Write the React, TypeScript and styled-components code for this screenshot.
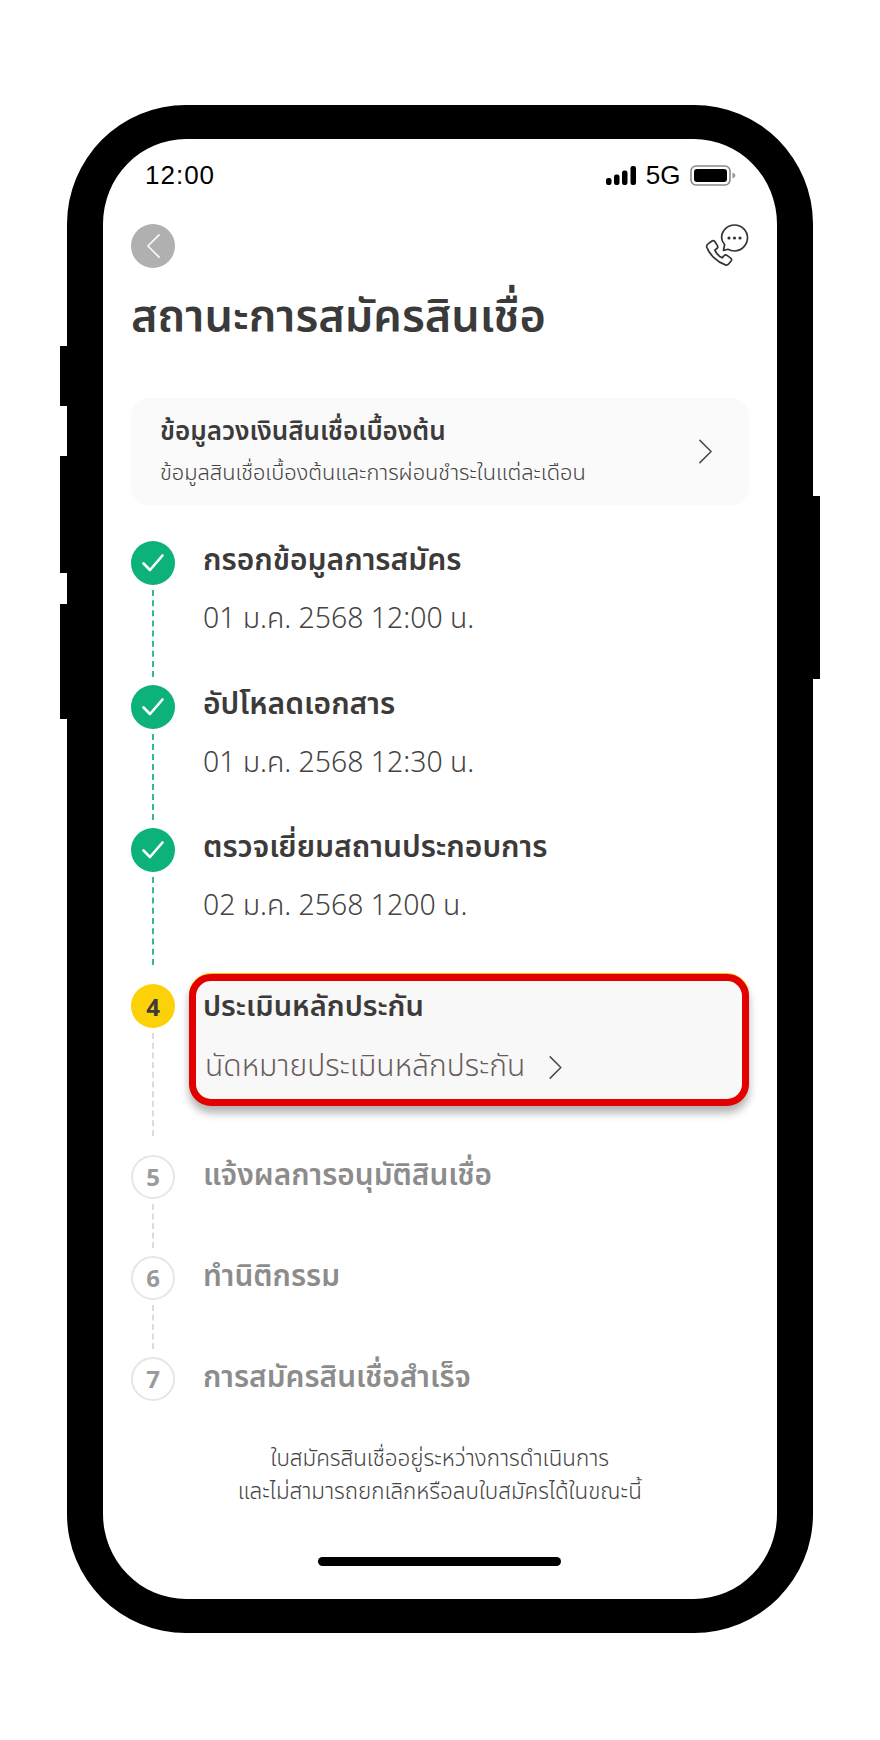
import React, { FC } from 'react';
import styled, { createGlobalStyle } from 'styled-components';

const thaiFont = `"Noto Sans Thai", "Noto Sans", "Open Sans", sans-serif`;

const GlobalStyle = createGlobalStyle`
  html, body {
    margin: 0;
    padding: 0;
    background: #fff;
  }
  * {
    box-sizing: border-box;
  }
`;

const Stage = styled.div`
  width: 880px;
  height: 1740px;
  padding: 105px 67px 0 67px;
  background: #fff;
  font-family: ${thaiFont};
`;

const Phone = styled.div`
  position: relative;
  width: 745.5px;
  height: 1528px;
  border: solid #000;
  border-width: 34px 36px;
  border-radius: 119px;
  background: #fff;
`;

const SideKey = styled.span<{ $side: 'left' | 'right'; $top: number; $height: number }>`
  position: absolute;
  top: ${(p) => p.$top}px;
  ${(p) => p.$side}: -43px;
  width: 8px;
  height: ${(p) => p.$height}px;
  background: #000;
`;

const Screen = styled.div`
  height: 100%;
  padding: 0 28px;
  display: flex;
  flex-direction: column;
`;

const StatusBar = styled.div`
  height: 70px;
  padding: 21px 13px 0 14px;
  display: flex;
  justify-content: space-between;
  align-items: flex-start;
  font-family: 'Liberation Sans', Arial, sans-serif;
  font-size: 26px;
  line-height: 30px;
  color: #000;
`;

const Time = styled.span`
  letter-spacing: 1px;
`;

const StatusIcons = styled.div`
  display: flex;
  align-items: center;
  gap: 9px;
`;

const TopBar = styled.div`
  height: 44px;
  margin-top: 15px;
  display: flex;
  justify-content: space-between;
  align-items: center;
`;

const BackButton = styled.button`
  width: 44px;
  height: 44px;
  padding: 0;
  border: none;
  border-radius: 50%;
  background: #b0b0b0;
  display: flex;
  align-items: center;
  justify-content: center;
`;

const PageTitle = styled.h1`
  margin: 18px 0 0;
  height: 62px;
  font-size: 45px;
  line-height: 62px;
  font-weight: 600;
  color: #3a3a3a;
  white-space: nowrap;
`;

const InfoCard = styled.div`
  margin-top: 50px;
  height: 107px;
  padding: 0 37px 0 29px;
  display: flex;
  justify-content: space-between;
  align-items: center;
  border-radius: 18px;
  background: #fafafa;
`;

const InfoTitle = styled.div`
  font-size: 26px;
  line-height: 40px;
  font-weight: 600;
  color: #3d3a3a;
  white-space: nowrap;
`;

const InfoText = styled.div`
  margin-top: 4px;
  font-size: 21.8px;
  line-height: 36px;
  font-weight: 300;
  color: #444;
  white-space: nowrap;
`;

const Steps = styled.div`
  margin-top: 36px;
  display: flex;
  flex-direction: column;
`;

const StepRow = styled.div<{ $height: number }>`
  height: ${(p) => p.$height}px;
  display: flex;
  gap: 28px;
`;

const Marker = styled.div`
  width: 44px;
  flex: none;
  display: flex;
  flex-direction: column;
  align-items: center;
`;

type Tone = 'done' | 'active' | 'pending';

const Dot = styled.div<{ $tone: Tone }>`
  width: 44px;
  height: 44px;
  flex: none;
  border-radius: 50%;
  display: flex;
  align-items: center;
  justify-content: center;
  font-family: 'Noto Sans', sans-serif;
  font-size: 24px;
  font-weight: 700;
  background: ${(p) => (p.$tone === 'done' ? '#0db27a' : p.$tone === 'active' ? '#fdd107' : '#fff')};
  border: ${(p) => (p.$tone === 'pending' ? '2px solid #e6e6e6' : 'none')};
  color: ${(p) => (p.$tone === 'pending' ? '#9a9a9a' : '#3d3a3a')};
`;

const Connector = styled.div<{ $tone: Tone; $tail: number }>`
  flex: 1;
  width: 0;
  margin: 5px 0 ${(p) => p.$tail}px;
  border-left: 2px dashed ${(p) => (p.$tone === 'done' ? '#36b795' : '#dcdcdc')};
`;

const StepBody = styled.div`
  flex: 1;
  min-width: 0;
`;

const StepTitle = styled.div<{ $tone: Tone }>`
  margin-top: ${(p) => (p.$tone === 'pending' ? 1 : 0)}px;
  font-size: ${(p) => (p.$tone === 'active' ? 29 : p.$tone === 'pending' ? 29.8 : 30)}px;
  line-height: 40px;
  font-weight: 600;
  color: ${(p) => (p.$tone === 'pending' ? '#8c8c8c' : '#3d3a3a')};
  white-space: nowrap;
`;

const StepDate = styled.div`
  margin-top: 19px;
  font-size: 28.4px;
  line-height: 40px;
  font-weight: 300;
  color: #444;
  white-space: nowrap;
`;

const ActiveBox = styled.div`
  position: relative;
  margin: -10px 0 0 -14px;
  width: 560px;
  height: 132px;
  padding: 6px 7px 0 7px;
  border: 7px solid #e30000;
  border-radius: 22px;
  background: #f8f8f8;
  box-shadow: 0 7px 8px rgba(0, 0, 0, 0.3), 0 -1px 0 #fdc400;
`;

const AppointmentLink = styled.div`
  margin-top: 20px;
  padding-left: 2px;
  display: flex;
  align-items: center;
  gap: 24px;
  font-size: 30px;
  line-height: 40px;
  font-weight: 300;
  color: #6a5c5c;
  white-space: nowrap;
`;

const FootNote = styled.p`
  margin: 42px 0 0;
  font-size: 22.4px;
  line-height: 33px;
  font-weight: 300;
  color: #444;
  text-align: center;
`;

const HomeBar = styled.div`
  margin: 48px auto 0;
  width: 243px;
  height: 9px;
  border-radius: 5px;
  background: #000;
`;

const Chevron: FC<{ width: number; height: number; color?: string; flip?: boolean }> = ({
  width,
  height,
  color = '#4a4a4a',
  flip,
}) => (
  <svg width={width} height={height} viewBox="0 0 14 26" fill="none">
    <path
      d={flip ? 'M13 1 1 13l12 12' : 'M1 1l12 12L1 25'}
      stroke={color}
      strokeWidth="1.5"
      strokeLinecap="round"
      strokeLinejoin="round"
      vectorEffect="non-scaling-stroke"
    />
  </svg>
);

const CheckIcon = () => (
  <svg width="24" height="20" viewBox="0 0 24 20" fill="none">
    <path d="M2.5 10.5 9 17 21.5 2.5" stroke="#fff" strokeWidth="2.6" strokeLinecap="round" strokeLinejoin="round" />
  </svg>
);

const SignalIcon = () => (
  <svg width="31" height="19" viewBox="0 0 31 19">
    <rect x="0" y="12" width="5.5" height="7" rx="2.2" fill="#000" />
    <rect x="8" y="8.5" width="5.5" height="10.5" rx="2.2" fill="#000" />
    <rect x="16" y="4.5" width="5.5" height="14.5" rx="2.2" fill="#000" />
    <rect x="24.5" y="0" width="5.5" height="19" rx="2.2" fill="#000" />
  </svg>
);

const BatteryIcon = () => (
  <svg width="46" height="21" viewBox="0 0 46 21">
    <rect x="1" y="1" width="39" height="19" rx="5" fill="none" stroke="#8a8a8a" strokeWidth="1.6" />
    <rect x="4" y="4" width="33" height="13" rx="3" fill="#000" />
    <path d="M42.5 7.5c1.8.6 2.8 1.7 2.8 3s-1 2.4-2.8 3z" fill="#9a9a9a" />
  </svg>
);

const CallChatIcon = () => (
  <svg width="44" height="44" viewBox="0 0 44 44" fill="none" stroke="#333" strokeWidth="1.7" strokeLinejoin="round">
    <path d="M3.4 19.6 7 17c1-.7 2.2-.4 2.8.5l2.6 4.1c.6 1 .4 2.2-.5 2.9l-2.1 1.6c1.6 3.600 4.200 6.200 7.300 7.700l2.100-2.100c.8-.8 1.900-.9 2.800-.3l3.700 2.700c1 .7 1.100 2 .4 2.900l-2.500 3c-.8 1-2.100 1.300-3.200.9C12.200 38 4 30 1.800 23.300c-.4-1.400.3-2.900 1.600-3.700z" />
    <path d="M18.500 26.500l1.100-6c-2-2.200-3-4.400-3-6.900C16.600 7 22.100 1 29.500 1S42.500 7 42.500 13.800 36.900 27 29.500 27c-2.500 0-4.700-.6-6.600-1.700z" />
    <circle cx="24" cy="14" r="1.600" fill="#333" stroke="none" />
    <circle cx="29.500" cy="14" r="1.600" fill="#333" stroke="none" />
    <circle cx="35" cy="14" r="1.600" fill="#333" stroke="none" />
  </svg>
);

const doneSteps = [
  { title: 'กรอกข้อมูลการสมัคร', date: '01 ม.ค. 2568 12:00 น.', height: 143.5, tail: 8 },
  { title: 'อัปโหลดเอกสาร', date: '01 ม.ค. 2568 12:30 น.', height: 143, tail: 8 },
  { title: 'ตรวจเยี่ยมสถานประกอบการ', date: '02 ม.ค. 2568 1200 น.', height: 156.5, tail: 19 },
];

const pendingSteps = [
  { no: 5, title: 'แจ้งผลการอนุมัติสินเชื่อ', height: 101 },
  { no: 6, title: 'ทำนิติกรรม', height: 101 },
  { no: 7, title: 'การสมัครสินเชื่อสำเร็จ', height: 44 },
];

const App: FC = () => (
  <Stage>
    <GlobalStyle />
    <Phone>
      <SideKey $side="left" $top={207} $height={60} />
      <SideKey $side="left" $top={317} $height={117} />
      <SideKey $side="left" $top={465} $height={115} />
      <SideKey $side="right" $top={357} $height={183} />
      <Screen>
        <StatusBar>
          <Time>12:00</Time>
          <StatusIcons>
            <SignalIcon />
            <span>5G</span>
            <BatteryIcon />
          </StatusIcons>
        </StatusBar>
        <TopBar>
          <BackButton aria-label="back">
            <Chevron width={13} height={26} color="#fff" flip />
          </BackButton>
          <CallChatIcon />
        </TopBar>
        <PageTitle>สถานะการสมัครสินเชื่อ</PageTitle>
        <InfoCard>
          <div>
            <InfoTitle>ข้อมูลวงเงินสินเชื่อเบื้องต้น</InfoTitle>
            <InfoText>ข้อมูลสินเชื่อเบื้องต้นและการผ่อนชำระในแต่ละเดือน</InfoText>
          </div>
          <Chevron width={13} height={25} />
        </InfoCard>
        <Steps>
          {doneSteps.map((step) => (
            <StepRow key={step.title} $height={step.height}>
              <Marker>
                <Dot $tone="done">
                  <CheckIcon />
                </Dot>
                <Connector $tone="done" $tail={step.tail} />
              </Marker>
              <StepBody>
                <StepTitle $tone="done">{step.title}</StepTitle>
                <StepDate>{step.date}</StepDate>
              </StepBody>
            </StepRow>
          ))}
          <StepRow $height={170.5}>
            <Marker>
              <Dot $tone="active">4</Dot>
              <Connector $tone="pending" $tail={19} />
            </Marker>
            <StepBody>
              <ActiveBox>
                <StepTitle $tone="active">ประเมินหลักประกัน</StepTitle>
                <AppointmentLink>
                  นัดหมายประเมินหลักประกัน
                  <Chevron width={13} height={23} />
                </AppointmentLink>
              </ActiveBox>
            </StepBody>
          </StepRow>
          {pendingSteps.map((step) => (
            <StepRow key={step.no} $height={step.height}>
              <Marker>
                <Dot $tone="pending">{step.no}</Dot>
                {step.no < 7 && <Connector $tone="pending" $tail={8} />}
              </Marker>
              <StepBody>
                <StepTitle $tone="pending">{step.title}</StepTitle>
              </StepBody>
            </StepRow>
          ))}
        </Steps>
        <FootNote>
          ใบสมัครสินเชื่ออยู่ระหว่างการดำเนินการ
          <br />
          และไม่สามารถยกเลิกหรือลบใบสมัครได้ในขณะนี้
        </FootNote>
        <HomeBar />
      </Screen>
    </Phone>
  </Stage>
);

export default App;
